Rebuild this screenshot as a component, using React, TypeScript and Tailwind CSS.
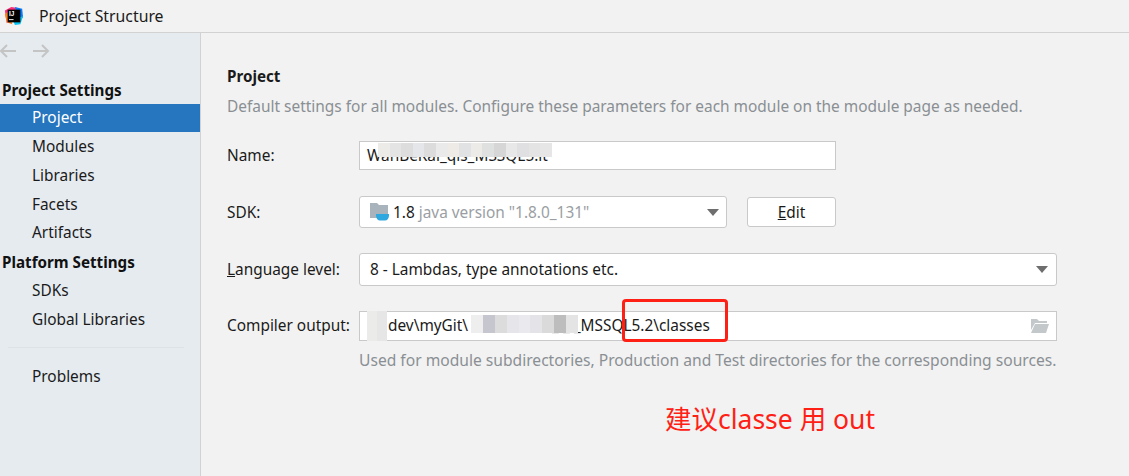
import type { ReactNode } from 'react'

const uiFont = { fontFamily: '"Noto Sans", "Noto Sans CJK SC", sans-serif' }

const sideItemClass = 'h-[29px] flex items-center pl-8 text-[15.4px] text-[#1a1a1a]'

function SideItem({ label }: { label: string }) {
  return <div className={sideItemClass}>{label}</div>
}

function SideGroup({ label }: { label: string }) {
  return <div className="h-[28px] flex items-center pl-0.5 text-[15.2px] font-bold text-[#111]">{label}</div>
}

function FieldRow({ label, children, rowClass }: { label: ReactNode; children: ReactNode; rowClass: string }) {
  return (
    <div className={`flex items-center ${rowClass}`}>
      <div className="w-[132px] shrink-0 text-[15.4px] text-[#1a1a1a]">{label}</div>
      {children}
    </div>
  )
}

// pixelated smudges that hide parts of the paths
function Smudge({ cells, className }: { cells: string[]; className: string }) {
  return (
    <div className={`absolute flex ${className}`}>
      {cells.map((c, i) => (
        <div key={i} className="flex-1 h-full" style={{ backgroundColor: c }} />
      ))}
    </div>
  )
}

function ComboArrow() {
  return <div className="w-0 h-0 border-x-[6px] border-x-transparent border-t-[7px] border-t-[#6e6e6e]" />
}

function AppLogo() {
  return (
    <svg width="20" height="20" viewBox="0 0 22 22" className="shrink-0">
      <polygon points="1,5 8,1 14,2 10,12 3,19" fill="#ff2d78" />
      <polygon points="1,9 6,5 9,20 3,18" fill="#fc801d" />
      <polygon points="12,1 20,3 21,13 15,12" fill="#087cfa" />
      <polygon points="10,16 21,11 18,20 12,21" fill="#07c3f2" />
      <rect x="4" y="4" width="14" height="14" fill="#000" />
      <text x="5.5" y="11" fontSize="7" fontWeight="700" fill="#fff" fontFamily="Liberation Sans, sans-serif">IJ</text>
      <rect x="5.5" y="14.5" width="5" height="1" fill="#fff" />
    </svg>
  )
}

function SdkIcon() {
  return (
    <svg width="20" height="18" viewBox="0 0 20 18" className="shrink-0">
      <path d="M0 0h7l2 2h9v13H0z" fill="#a8b3bb" />
      <path d="M6 11h13v1.500c0 3-2 5-4 5h-5c-2 0-4-2-4-5z" fill="#2fa8e0" />
    </svg>
  )
}

function OpenFolderIcon() {
  return (
    <svg width="20" height="14" viewBox="0 0 20 14">
      <path d="M1 0h6l2 2h8v2H5L1 11z" fill="#c3c8cb" />
      <path d="M5 5h14l-3 9H1z" fill="#c3c8cb" />
    </svg>
  )
}

export default function App() {
  return (
    <div className="relative w-[1129px] h-[476px] overflow-hidden bg-[#f2f2f2] flex flex-col" style={uiFont}>
      <div className="h-[33px] shrink-0 flex items-center pl-[4px] gap-[15px] border-b border-[#d2d2d2]">
        <AppLogo />
        <span className="pt-px text-[15.8px] text-[#1a1a1a]">Project Structure</span>
      </div>

      <div className="flex flex-1 min-h-0">
        <aside className="w-[201px] shrink-0 bg-[#e6ebf0] border-r border-[#d2d2d2] flex flex-col">
          <div className="h-[36px] flex items-center text-[#c4c4c4]">
            <svg width="52" height="14" viewBox="0 0 52 14" fill="none" stroke="currentColor" strokeWidth="2">
              <path d="M16 7H1M7 1L1 7l6 6" />
              <path d="M33 7h15M42 1l6 6-6 6" />
            </svg>
          </div>
          <div className="mt-[7px]">
            <SideGroup label="Project Settings" />
          </div>
          <div className="h-[28px] flex items-center pb-px pl-8 text-[15.4px] text-white bg-[#2675bf]">Project</div>
          <SideItem label="Modules" />
          <SideItem label="Libraries" />
          <SideItem label="Facets" />
          <div className="h-[29px] flex items-center pb-px pl-8 text-[15.4px] text-[#1a1a1a]">Artifacts</div>
          <SideGroup label="Platform Settings" />
          <SideItem label="SDKs" />
          <SideItem label="Global Libraries" />
          <div className="ml-2 mr-4 mt-[13px] mb-[14px] h-px bg-[#dde2e7]" />
          <SideItem label="Problems" />
        </aside>

        <main className="flex-1 min-w-0 pl-[26px] flex flex-col">
          <h1 className="mt-[32px] text-[15.2px] leading-[22px] font-bold text-[#1a1a1a]">Project</h1>
          <p className="mt-[8px] text-[15.44px] leading-[22px] text-[#8a8f94] whitespace-nowrap">
            Default settings for all modules. Configure these parameters for each module on the module page as needed.
          </p>

          <FieldRow label="Name:" rowClass="mt-[24px]">
            <div className="relative w-[477px] h-[29px] bg-white border border-[#c9c9c9] pl-[7px] flex items-center text-[15.4px] text-[#1a1a1a] overflow-hidden">
              WanBeKai_qis_MSSQL5.it
              <Smudge
                className="left-[18px] top-[1px] w-[174px] h-[14px]"
                cells={['#ecebe8', '#e4e4e4', '#dddddd', '#e4e6ea', '#dcdcdc', '#eaeaea', '#eeebe6', '#e0e2e4', '#ecebe8', '#dfe1e0', '#d6d6d6', '#e8e8e8', '#e0e0e2', '#e4e4e4', '#e6e6e6']}
              />
            </div>
          </FieldRow>

          <FieldRow label={<span className="block pt-px">SDK:</span>} rowClass="mt-[26px]">
            <div className="w-[368px] h-[32px] bg-white border border-[#c9c9c9] rounded-[3px] pl-[10px] pr-[7px] flex items-center text-[15.4px]">
              <SdkIcon />
              <span className="ml-[3px] pt-px text-[#1a1a1a]">1.8</span>
              <span className="ml-[4px] pt-px text-[#9a9ea3]">java version "1.8.0_131"</span>
              <div className="ml-auto"><ComboArrow /></div>
            </div>
            <button className="ml-[20px] w-[89px] h-[30px] pt-[2px] bg-white border border-[#c9c9c9] rounded-[3px] text-[15.4px] text-[#1a1a1a]">
              <span className="underline">E</span>dit
            </button>
          </FieldRow>

          <FieldRow label={<><span className="underline">L</span>anguage level:</>} rowClass="mt-[25px]">
            <div className="w-[698px] h-[33px] bg-white border border-[#c9c9c9] rounded-[3px] pl-[10px] pr-[8px] flex items-center text-[15.4px] text-[#1a1a1a]">
              8 - Lambdas, type annotations etc.
              <div className="ml-auto"><ComboArrow /></div>
            </div>
          </FieldRow>

          <FieldRow label="Compiler output:" rowClass="mt-[25px]">
            <div className="relative w-[698px] h-[30px] bg-white border border-[#c9c9c9] pl-[28px] pr-[6px] flex items-center text-[15.4px] text-[#1a1a1a]">
              <span>dev\myGit\</span>
              <span className="ml-[84px]">_ _ _MSSQL5.2\classes</span>
              <div className="ml-auto"><OpenFolderIcon /></div>
              <Smudge className="left-[7px] top-[-1px] w-[20px] h-[30px]" cells={['#ebebea', '#e6e6e6']} />
              <Smudge
                className="left-[111px] top-[3px] w-[107px] h-[18px]"
                cells={['#eeeeee', '#c6c6ce', '#dcdcdc', '#e6e6ea', '#eaeaee', '#e4e4e8', '#dadada', '#bdbdbd', '#e4e4e4']}
              />
            </div>
          </FieldRow>

          <p className="mt-[8px] ml-[132px] text-[15.62px] leading-[22px] text-[#8a8f94] whitespace-nowrap">
            Used for module subdirectories, Production and Test directories for the corresponding sources.
          </p>

          <p className="mt-[30px] ml-[438px] text-[26.5px] leading-[36px] text-[#ff2015] whitespace-nowrap">建议classe 用 out</p>
        </main>
      </div>

      <div className="absolute left-[622px] top-[299px] w-[106px] h-[43px] border-[3px] border-[#ff2015] rounded-[4px]" />
    </div>
  )
}
